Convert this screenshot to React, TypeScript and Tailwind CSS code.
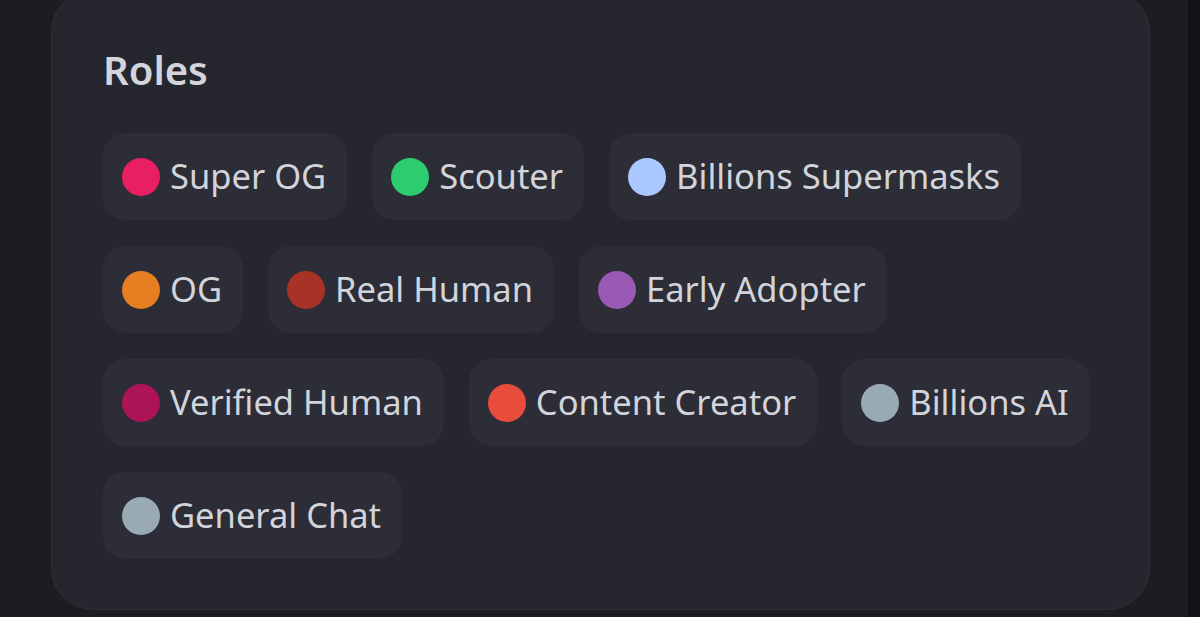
const roles = [
  [
    { name: 'Super OG', color: '#e91e63' },
    { name: 'Scouter', color: '#2ecc71' },
    { name: 'Billions Supermasks', color: '#aac8ff' },
  ],
  [
    { name: 'OG', color: '#e67e22' },
    { name: 'Real Human', color: '#a93226' },
    { name: 'Early Adopter', color: '#9b59b6' },
  ],
  [
    { name: 'Verified Human', color: '#ad1457' },
    { name: 'Content Creator', color: '#e74c3c' },
    { name: 'Billions AI', color: '#99aab5' },
  ],
  [{ name: 'General Chat', color: '#99aab5' }],
];

function RoleChip({ name, color }: { name: string; color: string }) {
  return (
    <div className="flex items-center h-[87px] pl-[19px] pr-[21px] rounded-[22px] bg-[#2c2d36]">
      <span className="w-[38px] h-[38px] rounded-full shrink-0" style={{ backgroundColor: color }} />
      <span className="ml-[10px] text-[34.5px] leading-none text-[#d2d4db] whitespace-nowrap">{name}</span>
    </div>
  );
}

export default function App() {
  return (
    <div
      className="w-[1200px] h-[617px] overflow-hidden flex bg-[#1c1d21]"
      style={{ fontFamily: '"Noto Sans", "Open Sans", sans-serif' }}
    >
      <div className="w-[1188px] flex">
        <div className="ml-[51px] -mt-[10px] w-[1099px] h-[620px] rounded-[42px] bg-[#25262e] border border-[#2e2f37] pl-[51px] pt-[59px]">
          <h2 className="text-[40px] font-semibold leading-none text-[#d4d5dc]">Roles</h2>
          <div className="mt-[43px] flex flex-col gap-[26px]">
            {roles.map((row, i) => (
              <div key={i} className="flex gap-[25px]">
                {row.map((r) => (
                  <RoleChip key={r.name} name={r.name} color={r.color} />
                ))}
              </div>
            ))}
          </div>
        </div>
      </div>
      <div className="flex-1 bg-[#121317]" />
    </div>
  );
}
